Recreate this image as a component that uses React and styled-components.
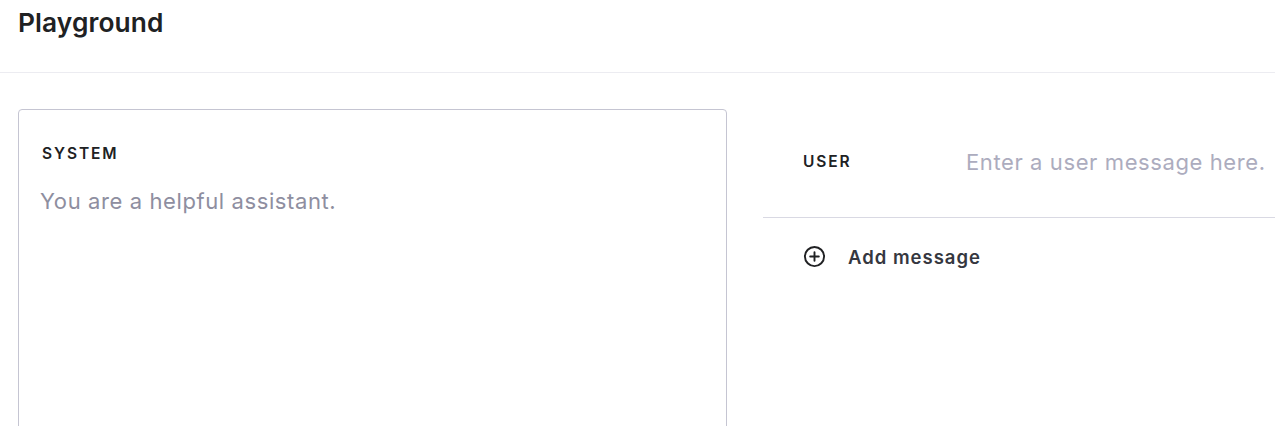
import React from 'react';
import styled, { createGlobalStyle } from 'styled-components';

const GlobalStyle = createGlobalStyle`
  html, body {
    margin: 0;
    padding: 0;
    background: #fff;
    overflow: hidden;
  }
  body {
    font-family: Inter, "Noto Sans", sans-serif;
    color: #202123;
  }
`;

const Page = styled.div`
  width: 1275px;
  height: 426px;
  overflow: hidden;
`;

const Header = styled.header`
  height: 73px;
  box-sizing: border-box;
  padding: 7px 18px 0;
  border-bottom: 1px solid #ececf1;
`;

const Title = styled.h1`
  margin: 0;
  font-size: 26.3px;
  line-height: 32px;
  font-weight: 600;
  letter-spacing: 0.1px;
  color: #202123;
`;

const Main = styled.main`
  display: flex;
  gap: 36px;
  padding: 36px 0 0 18px;
`;

const SystemBox = styled.section`
  width: 709px;
  height: 400px;
  box-sizing: border-box;
  flex-shrink: 0;
  border: 1px solid #c5c5d2;
  border-radius: 4px;
  padding: 34px 22px 0 21px;
`;

const Label = styled.div`
  font-size: 15.5px;
  font-weight: 600;
  letter-spacing: 1.9px;
  color: #202123;
  line-height: 20px;
`;

const SystemLabel = styled(Label)`
  padding-left: 2px;
`;

const SystemText = styled.div`
  margin-top: 23px;
  font-size: 22px;
  line-height: 28px;
  letter-spacing: 0.6px;
  color: #8e8ea0;
`;

const Conversation = styled.section`
  flex: 1;
  display: flex;
  flex-direction: column;
`;

const MessageRow = styled.div`
  display: flex;
  align-items: center;
  height: 109px;
  box-sizing: border-box;
  padding: 0 0 2px 40px;
  border-bottom: 1px solid #d9d9e3;
`;

const RoleLabel = styled(Label)`
  width: 163px;
  flex-shrink: 0;
`;

const Placeholder = styled.div`
  font-size: 22px;
  line-height: 28px;
  letter-spacing: 0.6px;
  color: #acacbe;
  white-space: nowrap;
`;

const AddButton = styled.button`
  display: flex;
  align-items: center;
  gap: 22px;
  margin: 27px 0 0 40px;
  padding: 0;
  border: none;
  background: none;
  font-family: inherit;
  font-size: 18.5px;
  font-weight: 600;
  letter-spacing: 1px;
  color: #353740;
  cursor: pointer;
`;

const PlusIcon = () => (
  <svg width="23" height="23" viewBox="0 0 24 24" fill="none" stroke="#202123" strokeWidth="2" strokeLinecap="round">
    <circle cx="12" cy="12" r="10" />
    <path d="M12 7.5v9M7.5 12h9" />
  </svg>
);

export default function App() {
  return (
    <Page>
      <GlobalStyle />
      <Header>
        <Title>Playground</Title>
      </Header>
      <Main>
        <SystemBox>
          <SystemLabel>SYSTEM</SystemLabel>
          <SystemText>You are a helpful assistant.</SystemText>
        </SystemBox>
        <Conversation>
          <MessageRow>
            <RoleLabel>USER</RoleLabel>
            <Placeholder>Enter a user message here.</Placeholder>
          </MessageRow>
          <AddButton>
            <PlusIcon />
            Add message
          </AddButton>
        </Conversation>
      </Main>
    </Page>
  );
}
